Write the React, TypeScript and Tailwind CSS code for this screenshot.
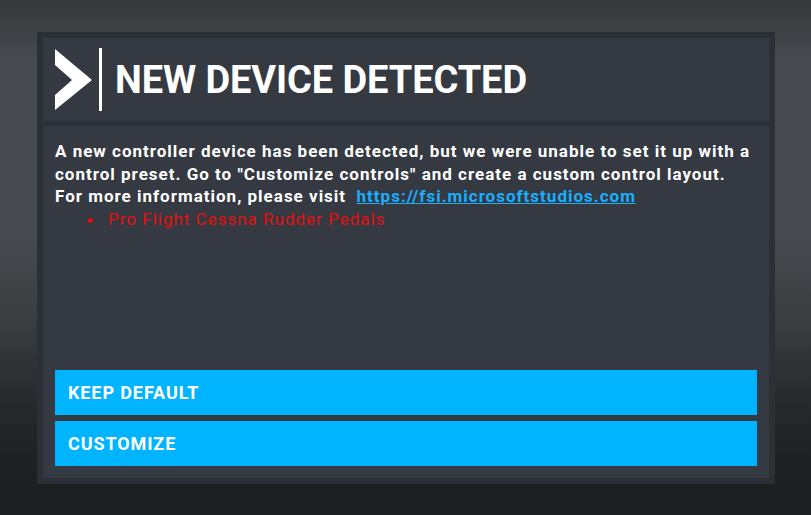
export default function App() {
  return (
    <div
      className="relative h-[515px] w-full overflow-hidden pl-[37px] pt-[32px] [font-family:Roboto,'Liberation_Sans',sans-serif]"
      style={{
        background:
          "linear-gradient(180deg, #35383b 0%, #3b3f42 4%, #474b4f 12%, #474b4f 45%, #3b3e41 62%, #27292b 78%, #1f2022 90%, #1d1e20 100%)",
      }}
    >
      <div className="flex h-[452px] w-[738px] flex-col gap-[5px] bg-[#2b2f36] p-[6px]">
        <div className="flex h-[83px] shrink-0 items-center bg-[#353941] pl-[12px]">
          <svg width="37" height="61" viewBox="0 0 37 61" aria-hidden>
            <path d="M0 0 L37 31 L0 61 L0 46 L17 31 L0 16 Z" fill="#ffffff" />
          </svg>
          <span className="ml-[7px] block h-[63px] w-[3px] bg-white" />
          <h1 className="ml-[13px] text-[38px] font-bold leading-none tracking-[-0.1px] text-white">
            NEW DEVICE DETECTED
          </h1>
        </div>

        <div className="flex flex-1 flex-col bg-[#353941] px-[12px] pb-[12px] pt-[14px]">
          <p className="text-[17px] font-bold leading-[22.5px] tracking-[1px] text-white">
            A new controller device has been detected, but we were unable to set it up with a
            control preset. Go to "Customize controls" and create a custom control layout.
            <br />
            For more information, please visit&nbsp;{" "}
            <a className="text-[#1aaeff] underline" href="#">
              https://fsi.microsoftstudios.com
            </a>
          </p>
          <ul className="ml-[50px] list-disc text-[17px] leading-[22.5px] tracking-[1px] text-[#e60f0f]">
            <li className="pl-[3px]">Pro Flight Cessna Rudder Pedals</li>
          </ul>

          <div className="mt-auto flex flex-col gap-[6px]">
            <button className="flex h-[45px] items-center bg-[#00b4ff] px-[13px] text-left text-[18px] font-bold tracking-[0.9px] text-white">
              KEEP DEFAULT
            </button>
            <button className="flex h-[45px] items-center bg-[#00b4ff] px-[13px] text-left text-[18px] font-bold tracking-[0.9px] text-white">
              CUSTOMIZE
            </button>
          </div>
        </div>
      </div>
    </div>
  );
}
